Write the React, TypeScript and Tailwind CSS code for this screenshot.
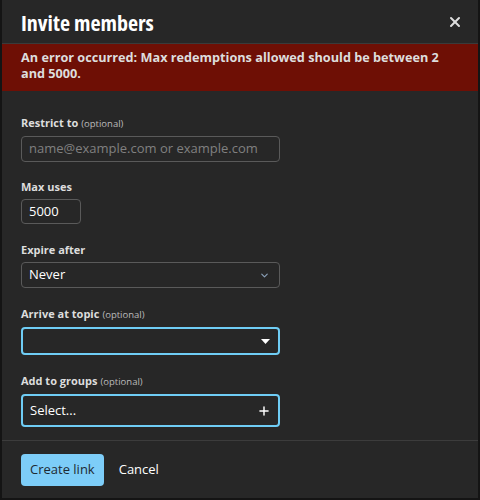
import { X, ChevronDown, Plus } from "lucide-react";

function Label({ text, optional }: { text: string; optional?: boolean }) {
  return (
    <div className="mb-[4px] text-[11px] font-bold leading-[16px] text-[#dddddd]">
      {text}
      {optional && (
        <span className="ml-[3px] text-[9.5px] font-normal text-[#bbbbbb]">(optional)</span>
      )}
    </div>
  );
}

export default function App() {
  return (
    <div
      className="h-[500px] w-[480px] overflow-hidden border-x-2 border-b-2 border-[#141414] bg-[#272727] text-[#dddddd]"
      style={{ fontFamily: '"Open Sans", "Noto Sans", sans-serif' }}
    >
      <div className="flex h-[43px] items-center justify-between pl-[19px] pr-[15px]">
        <h1 className="text-[22px] font-bold leading-none text-white font-stretch-[75%]">
          Invite members
        </h1>
        <X className="h-[16px] w-[16px] text-[#dddddd]" strokeWidth={3} />
      </div>
      <div className="border-t border-[#3a3a3a] bg-[#6e0f05] px-[19px] pb-[10px] pt-[5px] text-[12.7px] font-bold leading-[16px] text-[#dddddd]">
        An error occurred: Max redemptions allowed should be between 2 and 5000.
      </div>

      <div className="flex flex-col px-[19px] pt-[24px]">
        <Label text="Restrict to" optional />
        <div className="flex h-[26px] w-[259px] items-center whitespace-nowrap rounded-[4px] border border-[#5a5a5a] px-[7px] text-[13px] text-[#808080]">
          name@example.com or example.com
        </div>

        <div className="mt-[17px]">
          <Label text="Max uses" />
          <div className="flex h-[25px] w-[60px] items-center rounded-[4px] border border-[#5a5a5a] px-[7px] text-[13px] text-white">
            5000
          </div>
        </div>

        <div className="mt-[18px]">
          <Label text="Expire after" />
          <div className="flex h-[26px] w-[259px] items-center justify-between rounded-[4px] border border-[#5a5a5a] pl-[7px] pr-[9px] text-[13px] text-white">
            <span>Never</span>
            <ChevronDown className="h-[11px] w-[11px] text-[#8aa0b8]" strokeWidth={2.5} />
          </div>
        </div>

        <div className="mt-[18px]">
          <Label text="Arrive at topic" optional />
          <div className="flex h-[28px] w-[259px] items-center justify-end rounded-[4px] border-2 border-[#6fcdf5] pr-[8px]">
            <svg width="9" height="5" viewBox="0 0 9 5">
              <path d="M0 0 L9 0 L4.5 5 Z" fill="#ffffff" />
            </svg>
          </div>
        </div>

        <div className="mt-[18px]">
          <Label text="Add to groups" optional />
          <div className="flex h-[33px] w-[259px] items-center justify-between rounded-[4px] border-2 border-[#6fcdf5] pl-[7px] pr-[7px] text-[13px] text-white">
            <span>Select...</span>
            <Plus className="h-[14px] w-[14px] text-white" strokeWidth={2.5} />
          </div>
        </div>
      </div>

      <div className="mt-[13px] flex items-center gap-[15px] border-t border-[#3c3c3c] px-[19px] pt-[13px]">
        <button className="h-[32px] rounded-[4px] bg-[#7dcdf8] px-[9px] text-[13px] text-[#1e2a33]">
          Create link
        </button>
        <button className="text-[13px] text-white">Cancel</button>
      </div>
    </div>
  );
}
